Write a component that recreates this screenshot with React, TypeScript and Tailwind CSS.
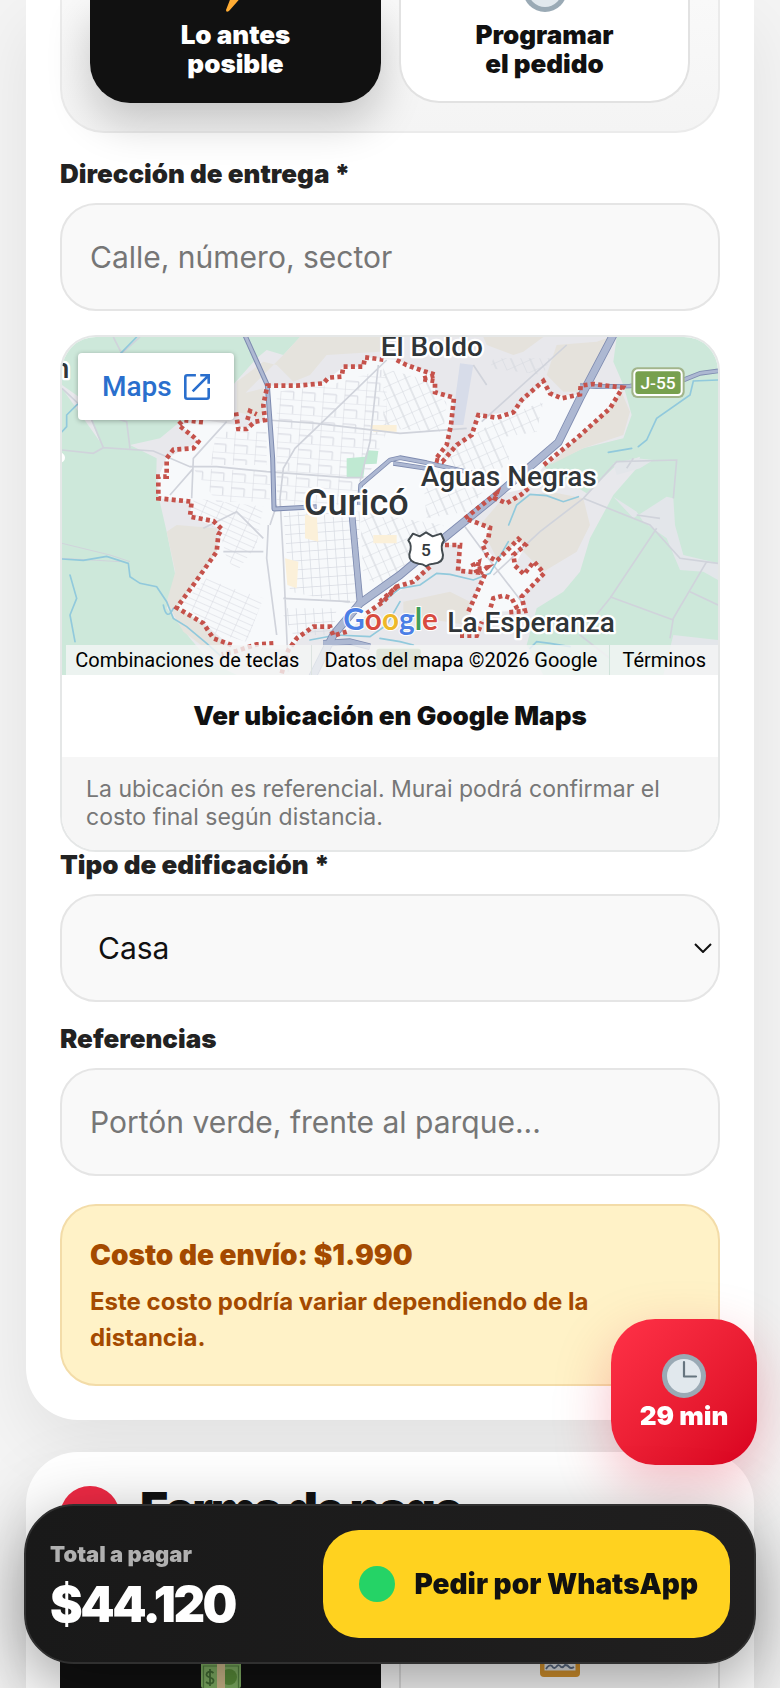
import type { ReactNode } from "react";

const BOUNDARY_LEFT =
  "M1040 785L1000 830L950 865M890 920L850 932L840 905L790 905L740 940L715 975L695 1045M670 955L620 958L560 978L515 988M545 960L490 940L460 895L380 848L430 780L500 680L505 630L515 612L490 588L420 575L425 530L325 520L325 455L350 455L350 400L370 374L430 370L445 350L430 335L385 300L400 285L460 292M558 262L565 312L590 312L615 290L645 285L640 240L652 182L740 182L820 175L835 158L875 155L880 125L940 125L945 97L1000 104M592 285L600 258L620 268";
const BOUNDARY_RIGHT =
  "M50 105L80 120L130 138L168 150L125 162L165 168L165 202L222 218L213 300L200 360L165 405L187 410L230 360L275 330L295 270L350 278L400 262L425 225L490 168L510 205L545 220L600 208L602 182L640 177L728 188L690 250L640 295L590 340L540 380L485 425M445 490L425 508L380 535L345 520L350 505L255 580L330 608L325 640L308 660L322 692L350 708L415 642L436 660L400 690L405 722L432 748L462 710L492 745L425 815L435 858L384 862M412 852L395 820L370 812L340 820L328 860M315 748L265 860M240 932L290 932L306 890M195 660L240 660L234 737L290 742L280 720L296 712L292 732L320 728L300 745M150 725L100 770L50 785L0 830";

function CityMap() {
  return (
    <svg viewBox="36 36 1968 1014" preserveAspectRatio="xMidYMid slice" className="block h-auto w-full" role="img" aria-label="Mapa de Curicó">
      <defs>
        <pattern id="blocks" width="26" height="27" patternUnits="userSpaceOnUse" patternTransform="rotate(-4)">
          <path d="M0 0H26M0 0V27" stroke="#d6d9e1" strokeWidth="4" />
        </pattern>
        <pattern id="wide" width="64" height="43" patternUnits="userSpaceOnUse" patternTransform="rotate(4)">
          <path d="M0 0H64M0 20H40M0 0V43M40 20V43" stroke="#dadce3" strokeWidth="3.5" fill="none" />
        </pattern>
        <pattern id="slant" width="46" height="18" patternUnits="userSpaceOnUse" patternTransform="rotate(24)">
          <path d="M0 0H46M0 0V18" stroke="#d6d8e0" strokeWidth="3" />
        </pattern>
        <pattern id="rise" width="52" height="34" patternUnits="userSpaceOnUse" patternTransform="rotate(-24)">
          <path d="M0 0H52M0 0V34M26 0V34" stroke="#d6d9df" strokeWidth="3.5" />
        </pattern>
      </defs>
      <rect x="36" y="36" width="1968" height="1014" fill="#cde8da" />
      <path d="M36 180L100 225L150 350L36 190z" fill="#e8e8ec" />
      <path d="M240 360L330 340L390 290L460 280L620 100L650 75L700 90L750 36H1700L1690 110L1720 180L1745 270L1720 340L1600 370L1480 425L1610 505L1700 420L1770 395L1760 430L1690 510L1620 640L1590 740L1540 800L1460 850L1430 960L1480 1050H560L480 1010L420 940L350 850L378 760L350 620L318 480L320 400z" fill="#e8e8ec" />
      <path d="M1690 515L1750 580L1850 515L1870 520L1875 600L1900 690L2004 715V765L1960 740L1890 735L1850 640L1780 590L1760 560zM1760 400L1810 405L1770 430L1700 450L1690 415zM1870 930L2004 945V1050H1840z" fill="#e3e6ea" />
      <path d="M560 170L640 110L680 120L730 170L780 150L830 90L990 80L1000 36H750L700 90L560 230zM380 600L500 610L500 690L390 850L450 890L540 970L520 1010L400 920L350 830L376 740L350 620zM560 210L640 190L640 280L560 260z" fill="#e5e3dd" />
      <path d="M1300 36H1480L1420 80L1390 90L1310 60zM1520 60L1640 50L1680 36L1660 90L1600 200L1540 200L1490 150zM1710 190L1740 260L1720 330L1600 370L1500 420L1720 200zM1350 530L1500 500L1600 520L1620 600L1580 680L1480 740L1410 670L1340 700L1290 600zM1060 830L1200 800L1260 830L1250 900L1060 870z" fill="#e5e2dc" />
      <path d="M652 182L820 175L880 125L940 125L945 97L1040 105L1155 150L1155 202L1212 218L1203 300L1180 405L1265 330L1285 270L1390 262L1480 170L1500 210L1590 210L1600 182L1718 188L1680 250L1580 340L1480 425L1430 490L1340 510L1250 580L1320 610L1300 660L1340 708L1405 645L1425 665L1395 720L1420 748L1452 710L1482 745L1415 815L1425 858L1320 860L1250 930L1270 820L1305 748L1230 737L1230 660L1180 660L1090 770L1000 830L890 920L790 905L715 975L540 960L460 895L380 848L500 680L515 612L420 575L425 530L325 520L325 455L350 400L445 350L390 300L460 285L560 300L590 312L645 285z" fill="#f7f9fb" />
      <path d="M700 560L930 560L920 840L720 800zM690 850H860L850 930H730z" fill="url(#blocks)" />
      <path d="M680 200L840 180L1010 130L1010 320L920 540H680zM500 320H650V420H480zM430 430L660 440V530H500zM720 330L890 300V460H720z" fill="url(#wide)" />
      <path d="M430 520L640 545L620 660L560 740L530 700L510 620L430 570zM520 780L640 820L590 950L480 920L400 830L470 760z" fill="url(#slant)" />
      <path d="M930 560L1180 600L1170 690L1000 780L940 760zM1180 430L1200 380L1330 290L1380 400L1250 560L1130 580L1120 470zM1330 100L1500 100L1480 150L1320 130zM1320 290L1480 230L1460 320L1340 340zM1000 130L1150 170L1150 210L1190 230L1180 320L1000 310z" fill="url(#rise)" />
      <path d="M890 400L945 395L952 376L985 378L980 416L945 418L940 458H890z" fill="#bfe9d2" />
      <path d="M1230 115L1270 120L1240 300L1205 300z" fill="#d7dce9" />
      <path d="M765 570L800 565L805 650L765 640zM705 700L745 710L740 790L712 780zM960 300H1040V320H970zM970 630H1040V655H970z" fill="#fbf0d9" />
      <g fill="none" stroke="#d0d3db" strokeWidth="5">
        <path d="M36 375L130 385L160 368L310 378L420 425L500 425L650 440L890 458H940M100 225L160 368M36 190L100 250L230 290L240 370M1010 105L860 250L735 370L700 430L690 520L700 700L715 1040M650 285L800 295L1050 325L1250 310M425 520L430 400L530 290M360 510L430 430M640 680L520 680M655 600L650 700L680 930M985 120L960 350L930 470M680 540L660 600M700 820L900 830M460 610L560 560L640 640M190 36L215 85L270 36" />
        <path d="M1245 605L1330 720L1415 830M1600 520L1470 620L1330 750M1600 520L1700 410L1880 405L1870 520M1600 520L1800 600L1890 700L2004 715M1970 710L1870 880L1860 940M1820 610L1680 820L1590 930L1680 1000M1680 815L1870 885M1920 800L2004 840M1750 400L1730 430M1760 570L1830 580M1295 290L1550 60M1270 120L1310 180" />
        <path d="M36 655L180 690L240 710M36 700L210 710" strokeWidth="3" />
      </g>
      <g fill="none" stroke="#91c9dc" strokeWidth="5" strokeLinecap="round">
        <path d="M36 702L100 706L170 694L235 715L240 755L270 775L320 785L350 830L370 880L410 905L470 955L520 1000M340 840Q350 890 370 850M60 750L80 820L60 870L75 950M212 85L260 36M36 320L50 305V270L82 238M780 945L860 930L960 935L1010 900L1050 830M1376 600L1400 540L1440 508L1490 512L1540 530L1585 515M1000 830L1050 790L1110 780L1160 745L1200 748L1270 765L1320 745L1375 650M2004 165L1930 168L1920 210L1820 280L1790 345L1765 365M1745 370L1675 382M1440 970L1460 950L1500 955L1560 965M990 940L1050 950L1090 960" />
      </g>
      <g fill="none" strokeLinejoin="round">
        <g stroke="#7e8bb0">
          <path d="M580 20L652 180L668 400L672 552L800 545" strokeWidth="15" />
          <path d="M928 540L932 480L1020 405L1050 398L1130 413L1270 445M1030 415L1140 432" strokeWidth="14" />
          <path d="M905 560L930 830M820 955L900 950L960 965" strokeWidth="20" />
          <path d="M785 1060L850 930L930 835L1050 750L1175 645L1335 515L1440 425L1525 352L1590 220L1695 20" strokeWidth="25" />
          <path d="M1590 182L1640 185L1740 183L1900 165L1950 145L2010 137" strokeWidth="14" />
        </g>
        <g stroke="#adb8d2">
          <path d="M580 20L652 180L668 400L672 552L800 545" strokeWidth="9" />
          <path d="M928 540L932 480L1020 405L1050 398L1130 413L1270 445M1030 415L1140 432" strokeWidth="9" />
          <path d="M905 560L930 830M820 955L900 950L960 965" strokeWidth="15" />
          <path d="M785 1060L850 930L930 835L1050 750L1175 645L1335 515L1440 425L1525 352L1590 220L1695 20" strokeWidth="20" />
          <path d="M1590 182L1640 185L1740 183L1900 165L1950 145L2010 137" strokeWidth="9" />
        </g>
      </g>
      <g fill="none" stroke="#c5524b" strokeWidth="14" strokeDasharray="12 10">
        <path d={BOUNDARY_LEFT} />
        <path d={BOUNDARY_RIGHT} transform="translate(990 0)" />
      </g>
      <rect x="1744" y="127" width="160" height="92" rx="18" fill="#a2b58b" />
      <rect x="1750" y="133" width="148" height="80" rx="14" fill="#fff" />
      <rect x="1756" y="139" width="136" height="68" rx="9" fill="#77a04e" />
      <text x="1824" y="191" textAnchor="middle" fontSize="52" fill="#fff" className="font-[Roboto,sans-serif] font-medium">J-55</text>
      <path d="M1089 626L1109 634L1128 622L1148 634L1173 626L1182 646Q1170 660 1179 690Q1180 714 1150 716Q1138 716 1128 724Q1118 716 1106 716Q1076 712 1078 688Q1088 662 1075 646z" fill="#fff" stroke="#434b50" strokeWidth="6" strokeLinejoin="round" />
      <text x="1128" y="693" textAnchor="middle" fontSize="52" fill="#33383b" className="font-[Roboto,sans-serif] font-medium">5</text>
      <g fill="#303538" stroke="#fff" strokeWidth="14" strokeLinejoin="round" paintOrder="stroke" className="font-[Roboto,sans-serif] font-medium">
        <text x="992" y="92" fontSize="84">El Boldo</text>
        <text x="1112" y="482" fontSize="84">Aguas Negras</text>
        <text x="1192" y="920" fontSize="84">La Esperanza</text>
        <text x="762" y="569" fontSize="108">Curicó</text>
        <text x="58" y="158" fontSize="84" textAnchor="end">n</text>
      </g>
      <circle cx="30" cy="398" r="15" fill="#fff" />
      <text x="880" y="914" fontSize="89" stroke="#fff" strokeWidth="6" paintOrder="stroke" className="font-[Lato,sans-serif] font-bold">
        <tspan fill="#4b7fe6">G</tspan><tspan fill="#d84b40">o</tspan><tspan fill="#eeb829">o</tspan><tspan fill="#4b7fe6">g</tspan><tspan fill="#3f9e5a">l</tspan><tspan fill="#d84b40">e</tspan>
      </text>
      <rect x="976" y="968" width="140" height="70" rx="12" fill="#8fa873" stroke="#e9efdf" strokeWidth="6" />
    </svg>
  );
}

function Clock({ className }: { className: string }) {
  return (
    <svg viewBox="0 0 44 44" className={className} aria-hidden="true">
      <circle cx="22" cy="22" r="22" fill="#9aaab5" />
      <circle cx="22" cy="22" r="17" fill="#e1e8ed" />
      <path d="M22 8V22.500H34" fill="none" stroke="#66757f" strokeWidth="2.200" strokeLinecap="round" strokeLinejoin="round" />
    </svg>
  );
}

function Bolt() {
  return (
    <svg viewBox="0 0 44 44" className="size-11" aria-hidden="true">
      <path d="M32 0L8 24H19L12 42Q12 45 15 43L37 18H26L34 1z" fill="#ffac33" />
    </svg>
  );
}

function Cash() {
  return (
    <svg viewBox="0 0 40 40" className="size-10" aria-hidden="true">
      <rect y="4" width="40" height="36" rx="2" fill="#83b366" />
      <path d="M2.500 40V18H37.500V40" fill="none" stroke="#548241" strokeWidth="1.200" />
      <circle cx="28" cy="29" r="8" fill="#5c913b" />
      <path d="M12.500 25Q9 22 6 25Q4 28 9 29.500Q14 31 12 34.500Q9 37 5 34M9 21V38" fill="none" stroke="#446f35" strokeWidth="1.800" />
      <rect x="16" y="4" width="8" height="36" fill="#d3bd8e" />
    </svg>
  );
}

function BankCard() {
  return (
    <svg viewBox="0 0 40 40" className="size-10" aria-hidden="true">
      <rect y="8" width="40" height="32" rx="4" fill="#d9962f" />
      <rect x="4.500" y="22" width="31" height="11.500" fill="#e4e7ea" />
      <path d="M6 32Q9 27 12 29Q14 33 17 29Q19 27 21 30Q23 31 25 28Q28 28 29 30Q31 32 34 30" fill="none" stroke="#5b6b83" strokeWidth="1.800" />
    </svg>
  );
}

const FIELD =
  "block h-[108px] w-full rounded-[36px] border-2 border-[#e5e5e5] bg-[#f9f9f9] text-[30px] text-[#111] placeholder:text-[#767676] outline-none";

function Label({ htmlFor, children }: { htmlFor: string; children: ReactNode }) {
  return (
    <label htmlFor={htmlFor} className="mb-4 block text-[26px] leading-[26px] font-black text-[#222]">
      {children}
    </label>
  );
}

export default function App() {
  return (
    <div className="min-h-screen overflow-hidden bg-[#f4f4f4] px-[26px] font-[Inter,sans-serif] text-[#111]">
      <section className="rounded-b-[52px] bg-white px-[34px] pb-[34px] shadow-[0_24px_70px_rgba(0,0,0,0.08)]">
        <div className="grid grid-cols-2 gap-[18px] rounded-b-[44px] border-2 border-t-0 border-[#ebebeb] bg-linear-to-b from-[#f9f9f9] to-[#f4f4f4] px-7 pb-7">
          <button type="button" className="flex flex-col items-center rounded-b-[40px] bg-[#111] pb-[25px] text-[26px] leading-[29px] font-black text-white shadow-[0_20px_44px_rgba(0,0,0,0.2)]">
            <span className="-mt-8 mb-2 block"><Bolt /></span>
            Lo antes
            <br />
            posible
          </button>
          <button type="button" className="flex flex-col items-center rounded-b-[40px] border-2 border-t-0 border-[#e2e2e2] bg-white pb-[23px] text-[26px] leading-[29px] font-black text-[#111]">
            <span className="-mt-8 mb-2 block"><Clock className="size-11" /></span>
            Programar
            <br />
            el pedido
          </button>
        </div>

        <div className="mt-7">
          <Label htmlFor="direccion">Dirección de entrega *</Label>
          <input id="direccion" type="text" placeholder="Calle, número, sector" className={`${FIELD} px-7`} />
        </div>

        <div className="mt-6 overflow-hidden rounded-[36px] border-2 border-[#e5e7e7] bg-white">
          <div className="relative overflow-hidden font-[Roboto,sans-serif]">
            <CityMap />
            <a href="#mapa" className="absolute top-4 left-4 flex items-center gap-3 rounded-[4px] bg-white py-4 pr-6 pl-6 text-[28px] leading-[35px] font-medium text-[#2a6fcd] shadow-[0_1px_5px_rgba(0,0,0,0.3)]">
              Maps
              <svg viewBox="0 0 24 24" className="size-[26px]" fill="none" stroke="currentColor" strokeWidth="2.400" aria-hidden="true">
                <path d="M11 1.200H3Q1.200 1.200 1.200 3V21Q1.200 22.800 3 22.800H21Q22.800 22.800 22.800 21V13M15 1.200H22.800V9M22.500 1.500L8 16" />
              </svg>
            </a>
            <div className="absolute right-0 bottom-0 left-1 flex h-[30px] items-center justify-end bg-[#f4f5f5]/80 text-[20px] leading-[30px] whitespace-nowrap text-black">
              <span className="px-3">Combinaciones de teclas</span>
              <span className="border-l border-[#dce3e0] px-3">Datos del mapa ©2026 Google</span>
              <span className="border-l border-[#cfe3da] px-3">Términos</span>
            </div>
          </div>
          <a href="#ubicacion" className="flex h-[82px] items-center justify-center pb-[2px] text-[26px] font-black">Ver ubicación en Google Maps</a>
          <p className="bg-[#f6f6f6] px-6 pt-[18px] pb-[19px] text-[23px] leading-7 text-[#777]">
            La ubicación es referencial. Murai podrá confirmar el costo final según distancia.
          </p>
        </div>

        <div>
          <Label htmlFor="edificacion">Tipo de edificación *</Label>
          <div className="relative">
            <select id="edificacion" className={`${FIELD} appearance-none px-9`}>
              <option>Casa</option>
              <option>Departamento</option>
              <option>Oficina</option>
            </select>
            <svg viewBox="0 0 18 10" className="pointer-events-none absolute top-1/2 right-2 h-[10px] w-[18px] -translate-y-1/2" fill="none" stroke="#111" strokeWidth="2" aria-hidden="true">
              <path d="M1 1L9 9L17 1" />
            </svg>
          </div>
        </div>

        <div className="mt-6">
          <Label htmlFor="referencias">Referencias</Label>
          <input id="referencias" type="text" placeholder="Portón verde, frente al parque..." className={`${FIELD} px-7`} />
        </div>

        <div className="mt-7 rounded-[36px] border-2 border-[#f3dca8] bg-[#fff2c7] px-7 py-7 text-[#a44a00]">
          <strong className="block text-[28px] leading-[42px] font-black">Costo de envío: $1.990</strong>
          <p className="mt-2 text-[24px] leading-9 font-bold">Este costo podría variar dependiendo de la distancia.</p>
        </div>
      </section>

      <section className="mt-8 rounded-t-[52px] bg-white px-[34px] pt-[34px] shadow-[0_24px_70px_rgba(0,0,0,0.08)]">
        <div className="flex h-[60px] gap-5">
          <span className="size-[60px] shrink-0 rounded-full bg-[#f02a45]" />
          <h2 className="text-[48px] leading-[48px] font-black tracking-tighter">Forma de pago</h2>
        </div>
        <div className="mt-7 grid grid-cols-2 gap-[18px]">
          <button type="button" aria-label="Efectivo" className="flex h-[114px] items-end justify-center bg-[#111]"><Cash /></button>
          <button type="button" aria-label="Transferencia" className="flex h-[114px] items-end justify-center border-x-2 border-[#e2e2e2] bg-white pb-[11px]"><BankCard /></button>
        </div>
      </section>

      <aside className="fixed right-[23px] bottom-[223px] flex size-[146px] flex-col items-center justify-center rounded-[44px] bg-linear-to-br from-[#ff3147] to-[#d9001f] shadow-[0_20px_56px_rgba(225,0,35,0.25)]">
        <Clock className="size-11" />
        <span className="mt-1 text-[26px] leading-7 font-black text-white">29 min</span>
      </aside>

      <footer className="fixed right-6 bottom-6 left-6 flex items-center justify-between rounded-[50px] border-2 border-[#303030] bg-linear-to-r from-[#191919] to-[#201f1f] p-6 shadow-[0_20px_70px_rgba(0,0,0,0.4)]">
        <div className="pt-2">
          <div className="text-[22px] leading-[26px] font-black text-[#b0b0b0]">Total a pagar</div>
          <div className="mt-2 text-[49px] leading-[60px] font-black tracking-tighter text-white">$44.120</div>
        </div>
        <button type="button" className="flex h-[108px] items-center gap-5 rounded-[36px] bg-[#ffd21f] pr-8 pl-9 text-[28px] font-black text-[#111]">
          <span className="size-9 rounded-full bg-[#25d366]" />
          Pedir por WhatsApp
        </button>
      </footer>
    </div>
  );
}
